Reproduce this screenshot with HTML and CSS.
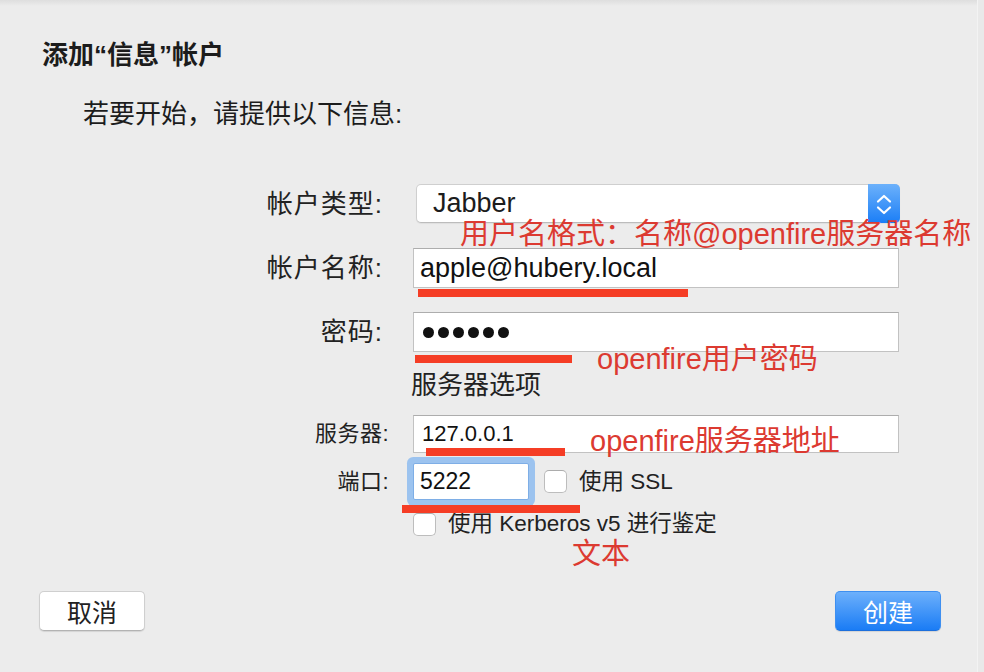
FILE: index.html
```html
<!DOCTYPE html>
<html>
<head>
<meta charset="utf-8"/>
<title>添加“信息”帐户</title>
<link rel="stylesheet" href="styles.css">
</head>

<body>
<div class="sheet">

<h1 class="title">添加“信息”帐户</h1>

<p class="intro">若要开始，请提供以下信息:</p>

<div class="form">

  <div class="row row-type">
    <span class="label">帐户类型:</span>
    <div class="popup">
      <span class="popup-value">Jabber</span>
      <span class="stepper">
        <svg width="32" height="39" viewBox="0 0 32 39">
          <path d="M10 17.5 L16 12 L22 17.5" fill="none" stroke="#fff" stroke-width="2.2" stroke-linecap="round" stroke-linejoin="round"/>
          <path d="M10 23.5 L16 29 L22 23.5" fill="none" stroke="#fff" stroke-width="2.2" stroke-linecap="round" stroke-linejoin="round"/>
        </svg>
      </span>
    </div>
  </div>

  <div class="row row-name">
    <span class="label">帐户名称:</span>
    <div class="field">apple@hubery.local</div>
  </div>

  <div class="row row-pass">
    <span class="label">密码:</span>
    <div class="field">
      <span class="dots"><i></i><i></i><i></i><i></i><i></i><i></i></span>
    </div>
  </div>

  <div class="row row-section">
    <span></span>
    <span class="section">服务器选项</span>
  </div>

  <div class="row compact row-server">
    <span class="label">服务器:</span>
    <div class="field field-small">127.0.0.1</div>
  </div>

  <div class="row compact row-port">
    <span class="label">端口:</span>
    <div class="port-line">
      <div class="field field-small field-port">5222</div>
      <span class="check"><span class="box"></span>使用 SSL</span>
    </div>
  </div>

  <div class="row compact row-kerberos">
    <span></span>
    <span class="check"><span class="box"></span>使用 Kerberos v5 进行鉴定</span>
  </div>

</div>

<div class="buttons">
  <button class="btn">取消</button>
  <button class="btn btn-primary">创建</button>
</div>

<!-- red notes drawn over the dialog -->
<div class="note note-user">用户名格式：名称@openfire服务器名称</div>
<div class="note note-pass">openfire用户密码</div>
<div class="note note-server">openfire服务器地址</div>
<div class="note note-text">文本</div>

<div class="mark mark-name"></div>
<div class="mark mark-pass"></div>
<div class="mark mark-server"></div>
<div class="mark mark-port"></div>

</div>
</body>
</html>
```

FILE: styles.css
```css
body {
   margin: 0;
   background-color: #ececec;
   font-family: "Liberation Sans", "Noto Sans CJK SC", sans-serif;
   color: #1c1c1c;
}

.sheet {
   position: relative;
   width: 984px;
   height: 672px;
   display: flex;
   flex-direction: column;
   background: linear-gradient(#dedede, #ececec 6px);
   box-shadow: inset -6px 0 0 #e9e9e9, inset -7px 0 0 #f3f3f3;
   overflow: hidden;
}

.title {
   margin: 0;
   padding: 40px 0 0 42px;
   font-size: 26px;
   line-height: 30px;
   font-weight: bold;
}

.intro {
   margin: 29px 0 0 83px;
   font-size: 26px;
   line-height: 30px;
}

/* form rows */

.form {
   display: flex;
   flex-direction: column;
   margin-top: 55px;
}

.row {
   display: grid;
   grid-template-columns: 383px 486px;
   column-gap: 30px;
   align-items: center;
}

.row.compact {
   grid-template-columns: 389px 486px;
   column-gap: 24px;
}

.label {
   text-align: right;
   font-size: 26px;
   line-height: 30px;
   letter-spacing: 1px;
   color: #222;
}

.compact .label {
   font-size: 22px;
   letter-spacing: 0.5px;
}

.row-name { margin-top: 25px; }
.row-pass { margin-top: 24px; }
.row-section { margin-top: 18px; }
.row-server { margin-top: 15px; }
.row-port { margin-top: 10px; }
.row-kerberos { margin-top: 12px; }

.popup {
   display: flex;
   align-items: center;
   margin-left: 3px;
   width: 484px;
   height: 39px;
   box-sizing: border-box;
   background: #fff;
   border: 1px solid #cfcfcf;
   border-bottom-color: #bcbcbc;
   border-radius: 5px;
   box-shadow: 0 1px 1px rgba(0,0,0,0.06);
}

.popup-value {
   flex: 1;
   padding-left: 16px;
   font-size: 27px;
}

.stepper {
   display: flex;
   width: 32px;
   height: 39px;
   margin: -1px -1px -1px 0;
   border-radius: 0 5px 5px 0;
   background: linear-gradient(#6cb1fb, #1b7ef6);
}

.field {
   display: flex;
   align-items: center;
   height: 40px;
   box-sizing: border-box;
   padding-left: 6px;
   background: #fff;
   border: 1px solid #c2c2c2;
   border-top-color: #adadad;
   font-size: 27px;
   color: #111;
}

.field-small {
   height: 38px;
   padding-left: 8px;
   font-size: 22px;
}

.dots {
   display: flex;
   gap: 4px;
   padding-left: 3px;
}

.dots i {
   width: 11px;
   height: 11px;
   border-radius: 50%;
   background: #111;
}

.section {
   margin-left: -2px;
   font-size: 26px;
   line-height: 30px;
   color: #222;
}

.port-line {
   display: flex;
   align-items: center;
   gap: 15px;
}

.field-port {
   width: 116px;
   height: 37px;
   padding-left: 6px;
   font-size: 23px;
   border: 1px solid #7eaee6;
   border-radius: 2px;
   box-shadow: 0 0 0 6px #9cc3ef;
}

.check {
   display: flex;
   align-items: center;
   gap: 12px;
   font-size: 22.5px;
   line-height: 24px;
   color: #222;
}

.box {
   width: 23px;
   height: 23px;
   box-sizing: border-box;
   background: #fff;
   border: 1px solid #bdbdbd;
   border-top-color: #acacac;
   border-radius: 5px;
}

/* buttons */

.buttons {
   display: flex;
   justify-content: space-between;
   margin-top: auto;
   padding: 0 43px 41px 39px;
}

.btn {
   width: 106px;
   height: 40px;
   font-family: "Liberation Sans", "Noto Sans CJK SC", sans-serif;
   font-size: 25px;
   color: #222;
   background: #fff;
   border: 1px solid #cfcfcf;
   border-bottom-color: #b3b3b3;
   border-radius: 5px;
   box-shadow: 0 1px 1px rgba(0,0,0,0.1);
   padding: 0;
}

.btn-primary {
   color: #fff;
   background: linear-gradient(#6db0fb, #1a7cf5);
   border-color: #3e8ff0;
   border-bottom-color: #1c6fdc;
}

/* annotations */

.note {
   position: absolute;
   font-size: 29px;
   line-height: 29px;
   color: #dc3a31;
   white-space: nowrap;
}

.note-user { left: 460px; top: 220px; }
.note-pass { left: 597px; top: 345px; }
.note-server { left: 590px; top: 427px; }
.note-text { left: 572px; top: 540px; }

.mark {
   position: absolute;
   height: 8px;
   background: #f53d25;
}

.mark-name { left: 418px; top: 289px; width: 270px; }
.mark-pass { left: 415px; top: 355px; width: 157px; }
.mark-server { left: 426px; top: 448px; width: 139px; }
.mark-port { left: 402px; top: 505px; width: 178px; }
```
